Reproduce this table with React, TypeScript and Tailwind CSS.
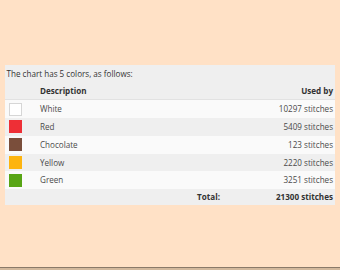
import React from "react";

const colors = [
  { name: "White", hex: "bg-[#ffffff] border-[#d6d6d6]", used: 10297 },
  { name: "Red", hex: "bg-[#ee2f36] border-[#ee2f36]", used: 5409 },
  { name: "Chocolate", hex: "bg-[#7a4e3b] border-[#7a4e3b]", used: 123 },
  { name: "Yellow", hex: "bg-[#fdb40f] border-[#fdb40f]", used: 2220 },
  { name: "Green", hex: "bg-[#58a515] border-[#58a515]", used: 3251 },
];

export default function App() {
  const total = colors.reduce((sum, c) => sum + c.used, 0);

  return (
    <div className="w-[340px] h-[270px] bg-[#ffe1c6] flex flex-col font-['Open_Sans',sans-serif] text-[8.1px] text-[#4a4a4a]">
      <div className="flex-1 pt-[65px] px-[5px]">
        <div className="w-[330px] bg-[#efefef]">
          <div className="h-[17.5px] pl-[1.5px] pt-[1.5px] flex items-center text-[#333]">
            The chart has 5 colors, as follows:
          </div>
          <div className="grid grid-cols-[35px_183px_1fr] h-[17.8px] items-center font-bold text-[#333] border-b border-[#e2e2e2]">
            <span />
            <span>Description</span>
            <span className="text-right pr-[2px]">Used by</span>
          </div>
          {colors.map((c, i) => (
            <div
              key={c.name}
              className={
                "grid grid-cols-[35px_183px_1fr] h-[17.8px] items-center " +
                (i % 2 === 0 ? "bg-[#fafafa]" : "bg-[#efefef]")
              }
            >
              <div className="pl-[4px]">
                <div className={"w-[13px] h-[13px] border " + c.hex} />
              </div>
              <span>{c.name}</span>
              <span className="text-right pr-[2px]">{c.used} stitches</span>
            </div>
          ))}
          <div className="grid grid-cols-[35px_183px_1fr] h-[15.5px] items-center font-bold text-[#333]">
            <span />
            <span className="text-right pr-[3px]">Total:</span>
            <span className="text-right pr-[2px]">{total} stitches</span>
          </div>
        </div>
      </div>
      <div className="h-[3px] border-t border-[#8a7968] bg-[#d2b89c]" />
    </div>
  );
}
